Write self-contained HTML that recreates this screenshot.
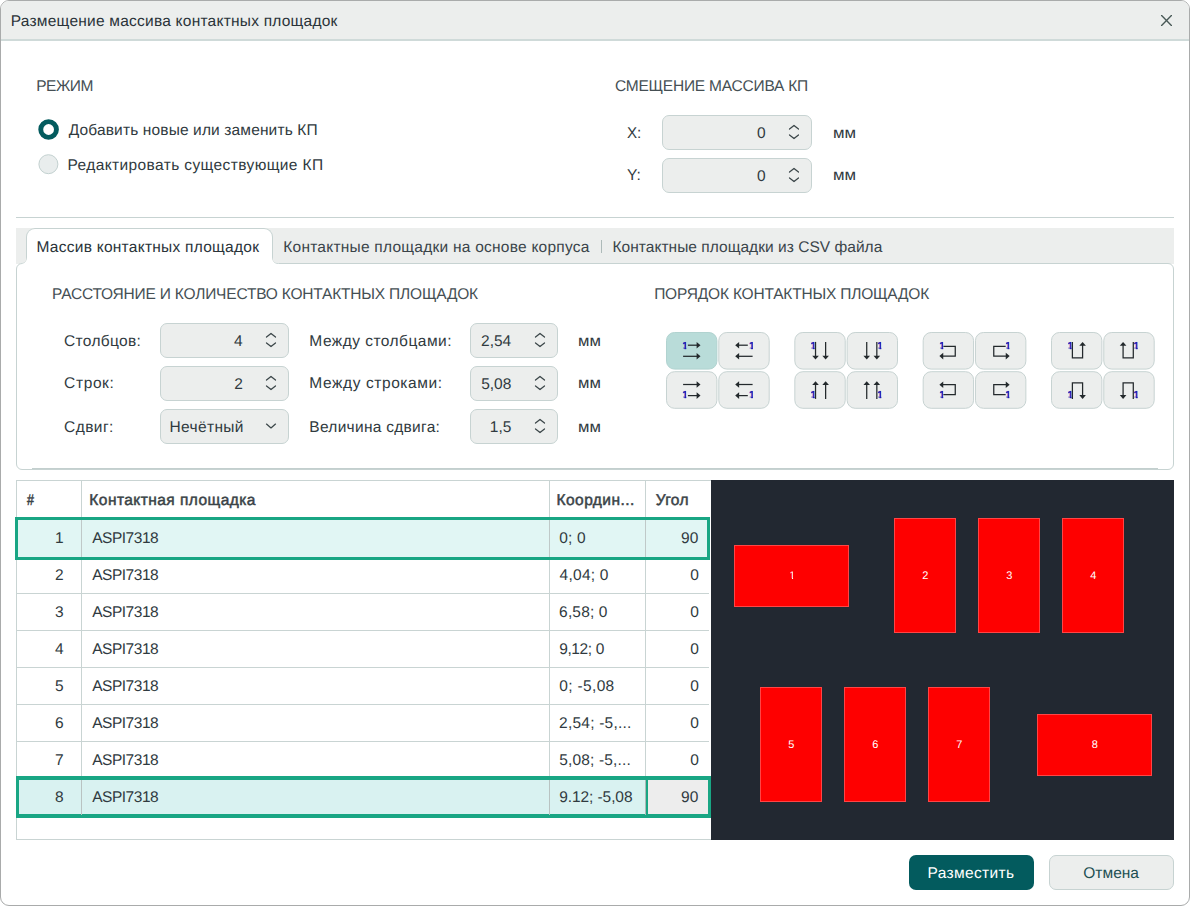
<!DOCTYPE html>
<html lang="ru">
<head>
<meta charset="utf-8">
<title>Размещение массива контактных площадок</title>
<style>
html,body{margin:0;padding:0;background:#fff;}
body{width:1190px;height:906px;position:relative;overflow:hidden;
 font-family:"Liberation Sans",Arial,sans-serif;font-size:15.5px;color:#242d33;
 text-rendering:geometricPrecision;}
#win{position:absolute;left:0;top:0;width:1188px;height:904px;border:1px solid #a9abab;
 border-radius:9px;background:#fff;overflow:hidden;}
#win div,#win span.t,#win svg{position:absolute;box-sizing:border-box;}
#win{box-sizing:content-box;}
span.t{white-space:nowrap;display:block;}
.field{background:#eceeed;border:1px solid #c7d3d2;border-radius:7px;}
.obtn{background:#eceeed;border:1px solid #c7d3d2;border-radius:9px;}
.obtn.on{background:#b9dcd9;border-color:#b3d5d2;}
.hl{background:#c7d3d2;}
text.p{font-family:"Liberation Sans",Arial,sans-serif;font-size:11px;fill:#fff;text-rendering:geometricPrecision;}
text.o{font-family:"Liberation Sans",Arial,sans-serif;font-weight:bold;font-size:10.3px;fill:#1c1cb4;stroke:#1c1cb4;stroke-width:0.35px;text-rendering:geometricPrecision;}
</style>
</head>
<body>
<div id="win">
<svg width="0" height="0" style="left:0;top:0"><defs><clipPath id="k1"><polygon points="0.41,-7.83 4.04,-7.83 4.04,0.31 2.29,0.31 2.29,-1.15 0.41,-1.15"/></clipPath></defs></svg>

<div class="" style="left:0px;top:0px;width:1188px;height:38px;background:#ecEEed;"></div>
<div class="" style="left:0px;top:38px;width:1188px;height:2px;background:#cfdad9;"></div>
<span class="t " style="top:13.00px;font-size:15.5px;line-height:15.5px;color:#2a3339;letter-spacing:0.234px;left:9.76px;">Размещение массива контактных площадок</span>
<svg style="left:1157px;top:11px" width="18" height="18" viewBox="0 0 18 18"><path d="M3.6 3.6 L13.4 13.4 M13.4 3.6 L3.6 13.4" stroke="#485856" stroke-width="1.35" stroke-linecap="round" fill="none"/></svg>
<span class="t " style="top:78.00px;font-size:15.5px;line-height:15.5px;color:#454f54;letter-spacing:-0.474px;left:35.16px;">РЕЖИМ</span>
<svg style="left:35px;top:115px" width="26" height="62" viewBox="36 116 26 62"><circle cx="48.6" cy="129.5" r="7.85" fill="#fff" stroke="#035b5e" stroke-width="4.9"/><circle cx="48.4" cy="164.2" r="9.5" fill="#e9eded" stroke="#c3d1d0" stroke-width="1"/></svg>
<span class="t " style="top:122.00px;font-size:15.5px;line-height:15.5px;color:#303a40;letter-spacing:0.141px;left:67.72px;">Добавить новые или заменить КП</span>
<span class="t " style="top:157.00px;font-size:15.5px;line-height:15.5px;color:#303a40;letter-spacing:0.387px;left:66.56px;">Редактировать существующие КП</span>
<span class="t " style="top:78.00px;font-size:15.5px;line-height:15.5px;color:#454f54;letter-spacing:-0.218px;left:613.92px;">СМЕЩЕНИЕ МАССИВА КП</span>
<span class="t " style="top:125.00px;font-size:15.5px;line-height:15.5px;color:#303a40;transform:scaleX(0.978);transform-origin:0 0;left:626.02px;">X:</span>
<span class="t " style="top:167.00px;font-size:15.5px;line-height:15.5px;color:#303a40;transform:scaleX(1.005);transform-origin:0 0;left:626.01px;">Y:</span>
<div class="field" style="left:661px;top:114px;width:150px;height:35px;"></div>
<svg style="left:784.6px;top:121.4px" width="16" height="20" viewBox="0 0 16 20"><path d="M3.5 7.0 L8 3.4 L12.5 7.0 M3.5 13.0 L8 16.6 L12.5 13.0" stroke="#3a4548" stroke-width="1.25" fill="none" stroke-linecap="round" stroke-linejoin="round"/></svg>
<span class="t " style="top:125.00px;font-size:15.5px;line-height:15.5px;color:#303a40;right:423.34px;text-align:right;">0</span>
<div class="field" style="left:661px;top:157px;width:150px;height:35px;"></div>
<svg style="left:784.6px;top:164.4px" width="16" height="20" viewBox="0 0 16 20"><path d="M3.5 7.0 L8 3.4 L12.5 7.0 M3.5 13.0 L8 16.6 L12.5 13.0" stroke="#3a4548" stroke-width="1.25" fill="none" stroke-linecap="round" stroke-linejoin="round"/></svg>
<span class="t " style="top:168.00px;font-size:15.5px;line-height:15.5px;color:#303a40;right:423.34px;text-align:right;">0</span>
<span class="t " style="top:125.00px;font-size:15.5px;line-height:15.5px;color:#303a40;transform:scaleX(1.082);transform-origin:0 0;left:831.63px;">мм</span>
<span class="t " style="top:167.00px;font-size:15.5px;line-height:15.5px;color:#303a40;transform:scaleX(1.082);transform-origin:0 0;left:831.63px;">мм</span>
<div class="hl" style="left:15px;top:216px;width:1158px;height:1px;"></div>
<div class="" style="left:15px;top:227px;width:1158px;height:36px;background:#ecEEed;"></div>
<div class="" style="left:15px;top:262px;width:1158px;height:207px;background:#fff;border:1px solid #c7d3d2;border-radius:6px;"></div>
<div class="" style="left:31px;top:467px;width:1126px;height:1px;background:#c3cfce;"></div>
<div class="" style="left:25px;top:227px;width:247px;height:36px;background:#fff;border:1px solid #c7d3d2;border-bottom:none;border-radius:9px 9px 0 0;"></div>
<svg style="left:19px;top:256px" width="7" height="7" viewBox="0 0 7 7"><path d="M7 0 V7 H0 Z" fill="#fff"/><path d="M0.5 6.5 Q6.5 6.5 6.5 0" fill="#ecEEed" stroke="#c7d3d2"/><path d="M0 0H6V3Q6 6 0 6Z" fill="#ecEEed"/></svg>
<svg style="left:271px;top:256px" width="7" height="7" viewBox="0 0 7 7"><path d="M0 0 V7 H7 Z" fill="#fff"/><path d="M6.5 6.5 Q0.5 6.5 0.5 0" fill="#ecEEed" stroke="#c7d3d2"/><path d="M7 0H1V3Q1 6 7 6Z" fill="#ecEEed"/></svg>
<span class="t " style="top:239.00px;font-size:15.5px;line-height:15.5px;color:#2a3339;letter-spacing:0.262px;left:35.46px;">Массив контактных площадок</span>
<span class="t " style="top:239.00px;font-size:15.5px;line-height:15.5px;color:#3a444a;letter-spacing:0.244px;left:282.26px;">Контактные площадки на основе корпуса</span>
<div class="" style="left:600px;top:239px;width:1px;height:13px;background:#adbab9;"></div>
<span class="t " style="top:239.00px;font-size:15.5px;line-height:15.5px;color:#3a444a;letter-spacing:0.031px;left:611.56px;">Контактные площадки из CSV файла</span>
<span class="t " style="top:286.00px;font-size:15.5px;line-height:15.5px;color:#454f54;letter-spacing:-0.192px;left:51.06px;">РАССТОЯНИЕ И КОЛИЧЕСТВО КОНТАКТНЫХ ПЛОЩАДОК</span>
<span class="t " style="top:286.00px;font-size:15.5px;line-height:15.5px;color:#454f54;letter-spacing:-0.192px;left:653.16px;">ПОРЯДОК КОНТАКТНЫХ ПЛОЩАДОК</span>
<span class="t " style="top:333.00px;font-size:15.5px;line-height:15.5px;color:#303a40;letter-spacing:0.313px;left:63.12px;">Столбцов:</span>
<span class="t " style="top:375.00px;font-size:15.5px;line-height:15.5px;color:#303a40;letter-spacing:0.619px;left:63.12px;">Строк:</span>
<span class="t " style="top:419.00px;font-size:15.5px;line-height:15.5px;color:#303a40;letter-spacing:0.426px;left:63.12px;">Сдвиг:</span>
<div class="field" style="left:159px;top:322px;width:129px;height:35px;"></div>
<svg style="left:261.7px;top:329.4px" width="16" height="20" viewBox="0 0 16 20"><path d="M3.5 7.0 L8 3.4 L12.5 7.0 M3.5 13.0 L8 16.6 L12.5 13.0" stroke="#3a4548" stroke-width="1.25" fill="none" stroke-linecap="round" stroke-linejoin="round"/></svg>
<span class="t " style="top:333.00px;font-size:15.5px;line-height:15.5px;color:#303a40;right:946.42px;text-align:right;">4</span>
<div class="field" style="left:159px;top:365px;width:129px;height:35px;"></div>
<svg style="left:261.7px;top:372.4px" width="16" height="20" viewBox="0 0 16 20"><path d="M3.5 7.0 L8 3.4 L12.5 7.0 M3.5 13.0 L8 16.6 L12.5 13.0" stroke="#3a4548" stroke-width="1.25" fill="none" stroke-linecap="round" stroke-linejoin="round"/></svg>
<span class="t " style="top:376.00px;font-size:15.5px;line-height:15.5px;color:#303a40;right:946.11px;text-align:right;">2</span>
<div class="field" style="left:159px;top:408px;width:129px;height:35px;"></div>
<svg style="left:262.8px;top:418.4px" width="14" height="14" viewBox="0 0 14 14"><path d="M2.5 5.1 L7 8.9 L11.5 5.1" stroke="#3a4548" stroke-width="1.25" fill="none" stroke-linecap="round" stroke-linejoin="round"/></svg>
<span class="t " style="top:419.00px;font-size:15.5px;line-height:15.5px;color:#303a40;letter-spacing:0.367px;left:168.46px;">Нечётный</span>
<span class="t " style="top:333.00px;font-size:15.5px;line-height:15.5px;color:#303a40;letter-spacing:0.474px;left:308.36px;">Между столбцами:</span>
<span class="t " style="top:375.00px;font-size:15.5px;line-height:15.5px;color:#303a40;letter-spacing:0.589px;left:308.36px;">Между строками:</span>
<span class="t " style="top:419.00px;font-size:15.5px;line-height:15.5px;color:#303a40;letter-spacing:0.279px;left:308.36px;">Величина сдвига:</span>
<div class="field" style="left:469px;top:322px;width:88px;height:35px;"></div>
<svg style="left:530.6px;top:329.4px" width="16" height="20" viewBox="0 0 16 20"><path d="M3.5 7.0 L8 3.4 L12.5 7.0 M3.5 13.0 L8 16.6 L12.5 13.0" stroke="#3a4548" stroke-width="1.25" fill="none" stroke-linecap="round" stroke-linejoin="round"/></svg>
<span class="t " style="top:333.00px;font-size:15.5px;line-height:15.5px;color:#303a40;right:677.81px;text-align:right;">2,54</span>
<div class="field" style="left:469px;top:365px;width:88px;height:35px;"></div>
<svg style="left:530.6px;top:372.4px" width="16" height="20" viewBox="0 0 16 20"><path d="M3.5 7.0 L8 3.4 L12.5 7.0 M3.5 13.0 L8 16.6 L12.5 13.0" stroke="#3a4548" stroke-width="1.25" fill="none" stroke-linecap="round" stroke-linejoin="round"/></svg>
<span class="t " style="top:376.00px;font-size:15.5px;line-height:15.5px;color:#303a40;right:677.66px;text-align:right;">5,08</span>
<div class="field" style="left:469px;top:408px;width:88px;height:35px;"></div>
<svg style="left:530.6px;top:415.4px" width="16" height="20" viewBox="0 0 16 20"><path d="M3.5 7.0 L8 3.4 L12.5 7.0 M3.5 13.0 L8 16.6 L12.5 13.0" stroke="#3a4548" stroke-width="1.25" fill="none" stroke-linecap="round" stroke-linejoin="round"/></svg>
<span class="t " style="top:419.00px;font-size:15.5px;line-height:15.5px;color:#303a40;right:677.68px;text-align:right;">1,5</span>
<span class="t " style="top:333.00px;font-size:15.5px;line-height:15.5px;color:#303a40;transform:scaleX(1.072);transform-origin:0 0;left:576.54px;">мм</span>
<span class="t " style="top:375.00px;font-size:15.5px;line-height:15.5px;color:#303a40;transform:scaleX(1.072);transform-origin:0 0;left:576.54px;">мм</span>
<span class="t " style="top:419.00px;font-size:15.5px;line-height:15.5px;color:#303a40;transform:scaleX(1.072);transform-origin:0 0;left:576.54px;">мм</span>
<svg style="left:659px;top:325px" width="500" height="90" viewBox="660 326 500 90"><rect x="666.50" y="332.50" width="50.40" height="36.60" rx="8" fill="#b9dcd9" stroke="#b1d3d0"/><g transform="translate(682.70 341.80)"><g transform="translate(0 0) scale(1 1)"><path d="M5.2 3.4 H15.8" stroke="#23292c" stroke-width="1.25" fill="none"/><path d="M17.8 3.4 L13.9 0.10000000000000009 V6.699999999999999 Z" fill="#23292c"/><path d="M0.4 14.5 H15.8" stroke="#23292c" stroke-width="1.25" fill="none"/><path d="M17.8 14.5 L13.9 11.2 V17.8 Z" fill="#23292c"/></g><g transform="translate(-0.50 7.69)" clip-path="url(#k1)"><text x="0" y="0" class="o">1</text></g></g><rect x="718.80" y="332.50" width="50.40" height="36.60" rx="8" fill="#eceeed" stroke="#c7d3d2"/><g transform="translate(735.00 341.80)"><g transform="translate(18 0) scale(-1 1)"><path d="M5.2 3.4 H15.8" stroke="#23292c" stroke-width="1.25" fill="none"/><path d="M17.8 3.4 L13.9 0.10000000000000009 V6.699999999999999 Z" fill="#23292c"/><path d="M0.4 14.5 H15.8" stroke="#23292c" stroke-width="1.25" fill="none"/><path d="M17.8 14.5 L13.9 11.2 V17.8 Z" fill="#23292c"/></g><g transform="translate(13.90 7.69)" clip-path="url(#k1)"><text x="0" y="0" class="o">1</text></g></g><rect x="666.50" y="371.70" width="50.40" height="36.60" rx="8" fill="#eceeed" stroke="#c7d3d2"/><g transform="translate(682.70 381.00)"><g transform="translate(0 18) scale(1 -1)"><path d="M5.2 3.4 H15.8" stroke="#23292c" stroke-width="1.25" fill="none"/><path d="M17.8 3.4 L13.9 0.10000000000000009 V6.699999999999999 Z" fill="#23292c"/><path d="M0.4 14.5 H15.8" stroke="#23292c" stroke-width="1.25" fill="none"/><path d="M17.8 14.5 L13.9 11.2 V17.8 Z" fill="#23292c"/></g><g transform="translate(-0.50 17.39)" clip-path="url(#k1)"><text x="0" y="0" class="o">1</text></g></g><rect x="718.80" y="371.70" width="50.40" height="36.60" rx="8" fill="#eceeed" stroke="#c7d3d2"/><g transform="translate(735.00 381.00)"><g transform="translate(18 18) scale(-1 -1)"><path d="M5.2 3.4 H15.8" stroke="#23292c" stroke-width="1.25" fill="none"/><path d="M17.8 3.4 L13.9 0.10000000000000009 V6.699999999999999 Z" fill="#23292c"/><path d="M0.4 14.5 H15.8" stroke="#23292c" stroke-width="1.25" fill="none"/><path d="M17.8 14.5 L13.9 11.2 V17.8 Z" fill="#23292c"/></g><g transform="translate(13.90 17.39)" clip-path="url(#k1)"><text x="0" y="0" class="o">1</text></g></g><rect x="794.83" y="332.50" width="50.40" height="36.60" rx="8" fill="#eceeed" stroke="#c7d3d2"/><g transform="translate(811.03 341.80)"><g transform="translate(0 0) scale(1 1)"><path d="M4.5 0.1 V15.8" stroke="#23292c" stroke-width="1.25" fill="none"/><path d="M4.5 17.8 L1.2000000000000002 13.9 H7.8 Z" fill="#23292c"/><path d="M14.6 0.1 V15.8" stroke="#23292c" stroke-width="1.25" fill="none"/><path d="M14.6 17.8 L11.3 13.9 H17.9 Z" fill="#23292c"/></g><g transform="translate(-0.50 7.69)" clip-path="url(#k1)"><text x="0" y="0" class="o">1</text></g></g><rect x="847.13" y="332.50" width="50.40" height="36.60" rx="8" fill="#eceeed" stroke="#c7d3d2"/><g transform="translate(863.33 341.80)"><g transform="translate(18 0) scale(-1 1)"><path d="M4.5 0.1 V15.8" stroke="#23292c" stroke-width="1.25" fill="none"/><path d="M4.5 17.8 L1.2000000000000002 13.9 H7.8 Z" fill="#23292c"/><path d="M14.6 0.1 V15.8" stroke="#23292c" stroke-width="1.25" fill="none"/><path d="M14.6 17.8 L11.3 13.9 H17.9 Z" fill="#23292c"/></g><g transform="translate(13.90 7.69)" clip-path="url(#k1)"><text x="0" y="0" class="o">1</text></g></g><rect x="794.83" y="371.70" width="50.40" height="36.60" rx="8" fill="#eceeed" stroke="#c7d3d2"/><g transform="translate(811.03 381.00)"><g transform="translate(0 18) scale(1 -1)"><path d="M4.5 0.1 V15.8" stroke="#23292c" stroke-width="1.25" fill="none"/><path d="M4.5 17.8 L1.2000000000000002 13.9 H7.8 Z" fill="#23292c"/><path d="M14.6 0.1 V15.8" stroke="#23292c" stroke-width="1.25" fill="none"/><path d="M14.6 17.8 L11.3 13.9 H17.9 Z" fill="#23292c"/></g><g transform="translate(-0.50 17.39)" clip-path="url(#k1)"><text x="0" y="0" class="o">1</text></g></g><rect x="847.13" y="371.70" width="50.40" height="36.60" rx="8" fill="#eceeed" stroke="#c7d3d2"/><g transform="translate(863.33 381.00)"><g transform="translate(18 18) scale(-1 -1)"><path d="M4.5 0.1 V15.8" stroke="#23292c" stroke-width="1.25" fill="none"/><path d="M4.5 17.8 L1.2000000000000002 13.9 H7.8 Z" fill="#23292c"/><path d="M14.6 0.1 V15.8" stroke="#23292c" stroke-width="1.25" fill="none"/><path d="M14.6 17.8 L11.3 13.9 H17.9 Z" fill="#23292c"/></g><g transform="translate(13.90 17.39)" clip-path="url(#k1)"><text x="0" y="0" class="o">1</text></g></g><rect x="923.16" y="332.50" width="50.40" height="36.60" rx="8" fill="#eceeed" stroke="#c7d3d2"/><g transform="translate(939.36 341.80)"><g transform="translate(0 0) scale(1 1)"><path d="M4.0 4.5 H15.9 V14.3 H2.5" stroke="#23292c" stroke-width="1.25" fill="none" stroke-linejoin="miter"/><path d="M0 14.3 L3.9 11 V17.6 Z" fill="#23292c"/></g><g transform="translate(-0.20 7.69)" clip-path="url(#k1)"><text x="0" y="0" class="o">1</text></g></g><rect x="975.46" y="332.50" width="50.40" height="36.60" rx="8" fill="#eceeed" stroke="#c7d3d2"/><g transform="translate(991.66 341.80)"><g transform="translate(18 0) scale(-1 1)"><path d="M4.0 4.5 H15.9 V14.3 H2.5" stroke="#23292c" stroke-width="1.25" fill="none" stroke-linejoin="miter"/><path d="M0 14.3 L3.9 11 V17.6 Z" fill="#23292c"/></g><g transform="translate(13.60 7.69)" clip-path="url(#k1)"><text x="0" y="0" class="o">1</text></g></g><rect x="923.16" y="371.70" width="50.40" height="36.60" rx="8" fill="#eceeed" stroke="#c7d3d2"/><g transform="translate(939.36 381.00)"><g transform="translate(0 18) scale(1 -1)"><path d="M4.0 4.5 H15.9 V14.3 H2.5" stroke="#23292c" stroke-width="1.25" fill="none" stroke-linejoin="miter"/><path d="M0 14.3 L3.9 11 V17.6 Z" fill="#23292c"/></g><g transform="translate(-0.20 17.39)" clip-path="url(#k1)"><text x="0" y="0" class="o">1</text></g></g><rect x="975.46" y="371.70" width="50.40" height="36.60" rx="8" fill="#eceeed" stroke="#c7d3d2"/><g transform="translate(991.66 381.00)"><g transform="translate(18 18) scale(-1 -1)"><path d="M4.0 4.5 H15.9 V14.3 H2.5" stroke="#23292c" stroke-width="1.25" fill="none" stroke-linejoin="miter"/><path d="M0 14.3 L3.9 11 V17.6 Z" fill="#23292c"/></g><g transform="translate(13.60 17.39)" clip-path="url(#k1)"><text x="0" y="0" class="o">1</text></g></g><rect x="1051.49" y="332.50" width="50.40" height="36.60" rx="8" fill="#eceeed" stroke="#c7d3d2"/><g transform="translate(1067.69 341.80)"><g transform="translate(0 0) scale(1 1)"><path d="M4.7 0.1 V16.1 H14.9 V2.5" stroke="#23292c" stroke-width="1.25" fill="none" stroke-linejoin="miter"/><path d="M14.9 0.1 L11.6 4 H18.2 Z" fill="#23292c"/></g><g transform="translate(-0.20 7.69)" clip-path="url(#k1)"><text x="0" y="0" class="o">1</text></g></g><rect x="1103.79" y="332.50" width="50.40" height="36.60" rx="8" fill="#eceeed" stroke="#c7d3d2"/><g transform="translate(1119.99 341.80)"><g transform="translate(18 0) scale(-1 1)"><path d="M4.7 0.1 V16.1 H14.9 V2.5" stroke="#23292c" stroke-width="1.25" fill="none" stroke-linejoin="miter"/><path d="M14.9 0.1 L11.6 4 H18.2 Z" fill="#23292c"/></g><g transform="translate(13.60 7.69)" clip-path="url(#k1)"><text x="0" y="0" class="o">1</text></g></g><rect x="1051.49" y="371.70" width="50.40" height="36.60" rx="8" fill="#eceeed" stroke="#c7d3d2"/><g transform="translate(1067.69 381.00)"><g transform="translate(0 18) scale(1 -1)"><path d="M4.7 0.1 V16.1 H14.9 V2.5" stroke="#23292c" stroke-width="1.25" fill="none" stroke-linejoin="miter"/><path d="M14.9 0.1 L11.6 4 H18.2 Z" fill="#23292c"/></g><g transform="translate(-0.20 17.39)" clip-path="url(#k1)"><text x="0" y="0" class="o">1</text></g></g><rect x="1103.79" y="371.70" width="50.40" height="36.60" rx="8" fill="#eceeed" stroke="#c7d3d2"/><g transform="translate(1119.99 381.00)"><g transform="translate(18 18) scale(-1 -1)"><path d="M4.7 0.1 V16.1 H14.9 V2.5" stroke="#23292c" stroke-width="1.25" fill="none" stroke-linejoin="miter"/><path d="M14.9 0.1 L11.6 4 H18.2 Z" fill="#23292c"/></g><g transform="translate(13.60 17.39)" clip-path="url(#k1)"><text x="0" y="0" class="o">1</text></g></g></svg>
<div class="" style="left:15px;top:479px;width:695px;height:360px;background:#fff;border:1px solid #c9d4d3;border-right:none;"></div>
<div class="" style="left:710px;top:479px;width:463px;height:360px;background:#222831;"></div>
<div class="" style="left:80px;top:480px;width:1px;height:336px;background:#c9d4d3;"></div>
<div class="" style="left:548px;top:480px;width:1px;height:336px;background:#c9d4d3;"></div>
<div class="" style="left:644px;top:480px;width:1px;height:336px;background:#c9d4d3;"></div>
<span class="t " style="top:492.00px;font-size:15.5px;line-height:15.5px;color:#3a4347;-webkit-text-stroke:0.5px currentColor;transform:scaleX(0.805);transform-origin:0 0;left:25.84px;">#</span>
<span class="t " style="top:492.00px;font-size:15.5px;line-height:15.5px;color:#3a4347;-webkit-text-stroke:0.5px currentColor;letter-spacing:0.441px;left:88.36px;">Контактная площадка</span>
<span class="t " style="top:492.00px;font-size:15.5px;line-height:15.5px;color:#3a4347;-webkit-text-stroke:0.5px currentColor;letter-spacing:0.437px;left:555.56px;">Координ...</span>
<span class="t " style="top:492.00px;font-size:15.5px;line-height:15.5px;color:#3a4347;-webkit-text-stroke:0.5px currentColor;letter-spacing:0.325px;left:654.73px;">Угол</span>
<div class="" style="left:16px;top:592px;width:692px;height:1px;background:#c9d4d3;"></div>
<div class="" style="left:16px;top:629px;width:692px;height:1px;background:#c9d4d3;"></div>
<div class="" style="left:16px;top:666px;width:692px;height:1px;background:#c9d4d3;"></div>
<div class="" style="left:16px;top:703px;width:692px;height:1px;background:#c9d4d3;"></div>
<div class="" style="left:16px;top:740px;width:692px;height:1px;background:#c9d4d3;"></div>
<div class="" style="left:16px;top:777px;width:692px;height:1px;background:#c9d4d3;"></div>
<div class="" style="left:14px;top:516px;width:695px;height:43px;background:#e1f6f4;border:3px solid #19a684;"></div>
<div class="" style="left:80px;top:519px;width:1px;height:37px;background:#bfc9c8;"></div>
<div class="" style="left:548px;top:519px;width:1px;height:37px;background:#bfc9c8;"></div>
<div class="" style="left:644px;top:519px;width:1px;height:37px;background:#bfc9c8;"></div>
<div class="" style="left:15px;top:775px;width:695px;height:42px;background:#d9f2f1;border:3px solid #19a684;border-top-width:4px;border-bottom-width:4px;"></div>
<div class="" style="left:80px;top:778.5px;width:1px;height:35px;background:#b9c3c2;"></div>
<div class="" style="left:548px;top:778.5px;width:1px;height:35px;background:#b9c3c2;"></div>
<div class="" style="left:644.5px;top:778.5px;width:2.5px;height:35px;background:#19a684;"></div>
<div class="" style="left:647px;top:779px;width:60px;height:34px;background:#ededed;"></div>
<div class="" style="left:644px;top:778.5px;width:1px;height:35px;background:#aeb8b7;"></div>
<span class="t " style="top:530.00px;font-size:15.5px;line-height:15.5px;color:#303a40;right:1125.40px;text-align:right;">1</span>
<span class="t " style="top:530.00px;font-size:15.5px;line-height:15.5px;color:#303a40;letter-spacing:-0.476px;left:91.20px;">ASPI7318</span>
<span class="t " style="top:530.00px;font-size:15.5px;line-height:15.5px;color:#303a40;letter-spacing:0.185px;left:558.28px;">0; 0</span>
<span class="t " style="top:530.00px;font-size:15.5px;line-height:15.5px;color:#303a40;right:490.70px;text-align:right;">90</span>
<span class="t " style="top:567.00px;font-size:15.5px;line-height:15.5px;color:#303a40;right:1125.40px;text-align:right;">2</span>
<span class="t " style="top:567.00px;font-size:15.5px;line-height:15.5px;color:#303a40;letter-spacing:-0.476px;left:91.20px;">ASPI7318</span>
<span class="t " style="top:567.00px;font-size:15.5px;line-height:15.5px;color:#303a40;letter-spacing:0.250px;left:558.59px;">4,04; 0</span>
<span class="t " style="top:567.00px;font-size:15.5px;line-height:15.5px;color:#303a40;right:490.10px;text-align:right;">0</span>
<span class="t " style="top:604.00px;font-size:15.5px;line-height:15.5px;color:#303a40;right:1125.40px;text-align:right;">3</span>
<span class="t " style="top:604.00px;font-size:15.5px;line-height:15.5px;color:#303a40;letter-spacing:-0.476px;left:91.20px;">ASPI7318</span>
<span class="t " style="top:604.00px;font-size:15.5px;line-height:15.5px;color:#303a40;letter-spacing:0.161px;left:558.12px;">6,58; 0</span>
<span class="t " style="top:604.00px;font-size:15.5px;line-height:15.5px;color:#303a40;right:490.10px;text-align:right;">0</span>
<span class="t " style="top:641.00px;font-size:15.5px;line-height:15.5px;color:#303a40;right:1125.40px;text-align:right;">4</span>
<span class="t " style="top:641.00px;font-size:15.5px;line-height:15.5px;color:#303a40;letter-spacing:-0.476px;left:91.20px;">ASPI7318</span>
<span class="t " style="top:641.00px;font-size:15.5px;line-height:15.5px;color:#303a40;letter-spacing:-0.385px;left:558.20px;">9,12; 0</span>
<span class="t " style="top:641.00px;font-size:15.5px;line-height:15.5px;color:#303a40;right:490.10px;text-align:right;">0</span>
<span class="t " style="top:678.00px;font-size:15.5px;line-height:15.5px;color:#303a40;right:1125.40px;text-align:right;">5</span>
<span class="t " style="top:678.00px;font-size:15.5px;line-height:15.5px;color:#303a40;letter-spacing:-0.476px;left:91.20px;">ASPI7318</span>
<span class="t " style="top:678.00px;font-size:15.5px;line-height:15.5px;color:#303a40;letter-spacing:0.342px;left:558.28px;">0; -5,08</span>
<span class="t " style="top:678.00px;font-size:15.5px;line-height:15.5px;color:#303a40;right:490.10px;text-align:right;">0</span>
<span class="t " style="top:715.00px;font-size:15.5px;line-height:15.5px;color:#303a40;right:1125.40px;text-align:right;">6</span>
<span class="t " style="top:715.00px;font-size:15.5px;line-height:15.5px;color:#303a40;letter-spacing:-0.476px;left:91.20px;">ASPI7318</span>
<span class="t " style="top:715.00px;font-size:15.5px;line-height:15.5px;color:#303a40;letter-spacing:0.220px;left:558.12px;">2,54; -5,...</span>
<span class="t " style="top:715.00px;font-size:15.5px;line-height:15.5px;color:#303a40;right:490.10px;text-align:right;">0</span>
<span class="t " style="top:752.00px;font-size:15.5px;line-height:15.5px;color:#303a40;right:1125.40px;text-align:right;">7</span>
<span class="t " style="top:752.00px;font-size:15.5px;line-height:15.5px;color:#303a40;letter-spacing:-0.476px;left:91.20px;">ASPI7318</span>
<span class="t " style="top:752.00px;font-size:15.5px;line-height:15.5px;color:#303a40;letter-spacing:0.160px;left:558.28px;">5,08; -5,...</span>
<span class="t " style="top:752.00px;font-size:15.5px;line-height:15.5px;color:#303a40;right:490.10px;text-align:right;">0</span>
<span class="t " style="top:789.00px;font-size:15.5px;line-height:15.5px;color:#303a40;right:1125.40px;text-align:right;">8</span>
<span class="t " style="top:789.00px;font-size:15.5px;line-height:15.5px;color:#303a40;letter-spacing:-0.476px;left:91.20px;">ASPI7318</span>
<span class="t " style="top:789.00px;font-size:15.5px;line-height:15.5px;color:#303a40;letter-spacing:-0.077px;left:558.20px;">9.12; -5,08</span>
<span class="t " style="top:789.00px;font-size:15.5px;line-height:15.5px;color:#303a40;right:490.70px;text-align:right;">90</span>
<svg style="left:710px;top:479px" width="463" height="360" viewBox="711 480 463 360"><defs><clipPath id="k2"><polygon points="0.77,-8.36 3.98,-8.36 3.98,0.33 2.62,0.33 2.62,-0.92 0.77,-0.92"/></clipPath></defs><rect x="734.5" y="545.5" width="114" height="61" fill="#fe0000" stroke="#ff4545" stroke-width="1"/><rect x="894.5" y="518.5" width="61" height="114" fill="#fe0000" stroke="#ff4545" stroke-width="1"/><rect x="978.5" y="518.5" width="61" height="114" fill="#fe0000" stroke="#ff4545" stroke-width="1"/><rect x="1062.5" y="518.5" width="61" height="114" fill="#fe0000" stroke="#ff4545" stroke-width="1"/><rect x="760.5" y="687.5" width="61" height="114" fill="#fe0000" stroke="#ff4545" stroke-width="1"/><rect x="844.5" y="687.5" width="61" height="114" fill="#fe0000" stroke="#ff4545" stroke-width="1"/><rect x="928.5" y="687.5" width="61" height="114" fill="#fe0000" stroke="#ff4545" stroke-width="1"/><rect x="1037.5" y="714.5" width="114" height="61" fill="#fe0000" stroke="#ff4545" stroke-width="1"/><g transform="translate(789.31 579)" clip-path="url(#k2)"><text x="0" y="0" class="p">1</text></g><text x="925.30" y="579" text-anchor="middle" class="p">2</text><text x="1009.30" y="579" text-anchor="middle" class="p">3</text><text x="1093.30" y="579" text-anchor="middle" class="p">4</text><text x="791.30" y="748" text-anchor="middle" class="p">5</text><text x="875.30" y="748" text-anchor="middle" class="p">6</text><text x="959.30" y="748" text-anchor="middle" class="p">7</text><text x="1094.80" y="748" text-anchor="middle" class="p">8</text></svg>
<div class="" style="left:908px;top:854px;width:125px;height:35px;background:#035b5e;border-radius:7px;"></div>
<span class="t " style="top:865.00px;font-size:15.5px;line-height:15.5px;color:#ffffff;letter-spacing:0.361px;left:926.46px;">Разместить</span>
<div class="" style="left:1048px;top:854px;width:125px;height:35px;background:#eceeed;border:1px solid #c7d3d2;border-radius:7px;"></div>
<span class="t " style="top:865.00px;font-size:15.5px;line-height:15.5px;color:#1d4f52;letter-spacing:0.006px;left:1082.30px;">Отмена</span>
</div>
</body>
</html>
